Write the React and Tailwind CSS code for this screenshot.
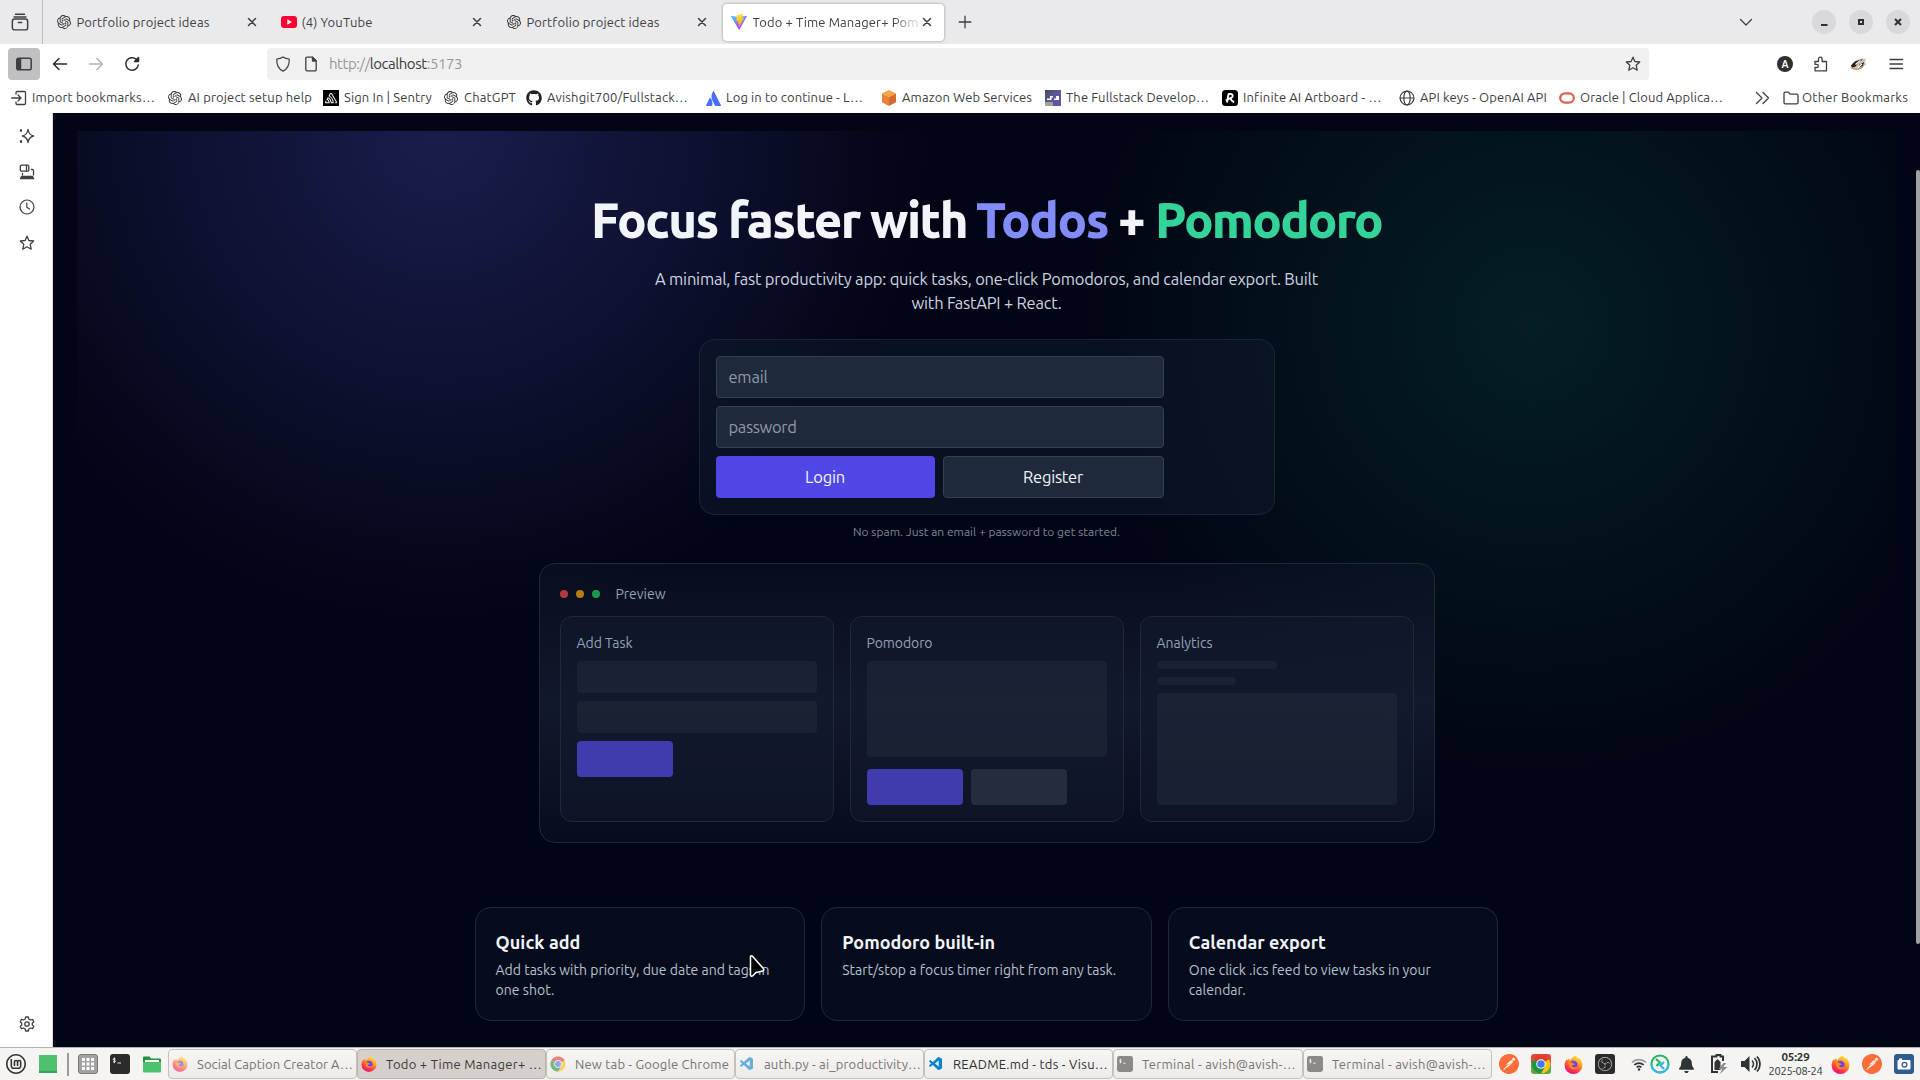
import React, { useLayoutEffect, useRef } from "react";
import { SiOpenai, SiSentry, SiPostman, SiObsstudio, SiLinuxmint, SiAtlassian } from "react-icons/si";
import { FaGithub, FaBell } from "react-icons/fa";
import { VscVscode } from "react-icons/vsc";

/* Single line of text whose letter spacing is tuned so that it spans `w` pixels. */
function Fit({ w, className = "", children }) {
  const ref = useRef(null);
  useLayoutEffect(() => {
    const el = ref.current;
    const tune = () => {
      el.style.letterSpacing = "0px";
      const natural = el.getBoundingClientRect().width;
      el.style.letterSpacing = (w - natural) / el.textContent.length + "px";
    };
    tune();
    document.fonts?.ready.then(tune);
  }, [w]);
  return (
    <span ref={ref} className={"inline-block shrink-0 whitespace-nowrap " + className}>
      {children}
    </span>
  );
}

function Svg({ s = 16, children, className = "", sw = 1.3 }) {
  return (
    <svg width={s} height={s} viewBox="0 0 16 16" fill="none" stroke="currentColor" strokeWidth={sw} strokeLinecap="round" strokeLinejoin="round" className={"shrink-0 " + className}>
      {children}
    </svg>
  );
}

const STAR = "M8 1.2l1.9 4.3 4.8.5-3.5 3.3 1 4.9L8 11.8l-4.2 2.4 1-4.9L1.3 6l4.8-.5z";

const Close = () => (
  <Svg s={16} sw={1.5}>
    <path d="M4.5 4.5l7 7M11.5 4.5l-7 7" />
  </Svg>
);

const YouTube = () => (
  <svg width="16" height="16" viewBox="0 0 16 16" className="shrink-0">
    <rect y="2" width="16" height="12" rx="3" fill="#ff0033" />
    <path d="M6.3 5.2v5.6L11 8z" fill="#fff" />
  </svg>
);

const Vite = () => (
  <svg width="16" height="16" viewBox="0 0 32 32" className="shrink-0">
    <defs>
      <linearGradient id="va" x1="0" y1="0" x2=".6" y2="1">
        <stop offset="0" stopColor="#41d1ff" />
        <stop offset="1" stopColor="#bd34fe" />
      </linearGradient>
      <linearGradient id="vb" x1=".4" y1="0" x2=".6" y2="1">
        <stop offset="0" stopColor="#ffea83" />
        <stop offset=".1" stopColor="#ffdd35" />
        <stop offset="1" stopColor="#ffa800" />
      </linearGradient>
    </defs>
    <path d="M31.6 5L17 31c-.4.6-1.300.6-1.600 0L.2 5c-.4-.7.2-1.500 1-1.300L16 6.300 30.700 3.700c.8-.2 1.400.6.9 1.300z" fill="url(#va)" />
    <path d="M22.700.1l-10.900 2.100c-.2 0-.3.2-.3.400l-.7 11.300c0 .3.2.5.5.4l3-.7c.3 0 .6.200.5.5l-.9 4.400c-.1.300.2.5.5.400l1.900-.5c.3-.1.600.1.500.5L15.400 25.700c-.1.500.5.7.7.4L26 8c.100-.300-.100-.600-.500-.500l-3.100.6c-.3 0-.6-.2-.500-.5l2-7c.1-.3-.2-.6-1.200-.5z" fill="url(#vb)" />
  </svg>
);

const Chrome = ({ s = 16 }) => (
  <svg width={s} height={s} viewBox="0 0 16 16" className="shrink-0">
    <circle cx="8" cy="8" r="7.500" fill="#fbc116" />
    <path d="M8 8L1.500 4.250A7.500 7.500 0 0 1 14.500 4.250z" fill="#e33b2e" />
    <path d="M8 8L1.500 4.250A7.500 7.500 0 0 0 8 15.500L11.200 9.900z" fill="#229342" />
    <path d="M8 4.200h6.500l-.6-1H5z" fill="#e33b2e" />
    <circle cx="8" cy="8" r="3.800" fill="#fff" />
    <circle cx="8" cy="8" r="3" fill="#3b7ded" />
  </svg>
);

const Firefox = ({ s = 16 }) => (
  <svg width={s} height={s} viewBox="0 0 16 16" className="shrink-0">
    <defs>
      <linearGradient id="ffx" x1=".8" y1="0" x2=".3" y2="1">
        <stop offset="0" stopColor="#fff044" />
        <stop offset=".4" stopColor="#ff9a1f" />
        <stop offset=".75" stopColor="#ff3750" />
        <stop offset="1" stopColor="#eb0878" />
      </linearGradient>
    </defs>
    <path d="M10 .3c.5 1.500 1.400 2 2.300 2.800 0-.3 0-.6-.1-.9 2 1.400 3.400 3.800 3.300 6.500a7.500 7.300 0 0 1-15 0c0-2 .6-3.900 1.800-5.400l.2 1.200c.6-.8 1.100-1.400 1.900-1.800 0 .8.200 1.400.7 1.900C6.500 3 8 1 10 .3z" fill="url(#ffx)" />
    <circle cx="8" cy="8.300" r="3.500" fill="#7542e5" />
    <path d="M4 6.500c1.200-.6 2.500-.4 3.500.4l1.500.6c-.4 1-1.500 1-2 1.300-.4.800.5 1.700 1.600 1.700 1.300 0 1.900-.7 2.700-.6-.5 1.200-1.800 2-3.400 2C5.700 11.900 3.900 10 4 6.500z" fill="#ff8a16" />
  </svg>
);

const Term = ({ s = 20, c = "#2b2b2b" }) => (
  <svg width={s} height={s} viewBox="0 0 20 20" className="shrink-0">
    <rect width="20" height="20" rx="3" fill={c} />
    <path d="M5.500 5c-1.500-.9-2.500-.2-2.200.6.300.8 2 .6 2.200 1.500.2.900-1.300 1.300-2.500.5M4.300 3.500v5.600M7.500 9h3.500" stroke="#fff" strokeWidth=".9" fill="none" />
  </svg>
);

const Tab = ({ icon, text, w, active }) => (
  <div className={"mr-1 flex h-[37px] w-[221px] shrink-0 items-center rounded pl-2 pr-[9px] " + (active ? "bg-white shadow-[0_0_3px_rgba(0,0,0,0.4)]" : "")}>
    {icon}
    {active ? (
      <div className="ml-1.5 min-w-0 flex-1 pt-px [mask-image:linear-gradient(to_right,#000_85%,rgba(0,0,0,0.25)_96%)]">
        <Fit w={w}>{text}</Fit>
      </div>
    ) : (
      <div className="ml-[5px] min-w-0 flex-1 pt-px">
        <Fit w={w}>{text}</Fit>
      </div>
    )}
    <Close />
  </div>
);

const GPT = () => <SiOpenai className="size-[14px] shrink-0 text-[#333]" />;

const bookmarks = [
  ["w-[156px]", <Svg><path d="M5 4V2.700A1.200 1.200 0 0 1 6.200 1.500h7A1.200 1.200 0 0 1 14.500 2.700v10.600a1.200 1.200 0 0 1-1.300 1.200h-7A1.200 1.200 0 0 1 5 13.300V12M.8 8h9M7 5l3 3-3 3" /></Svg>, "Import bookmarks…", 123],
  ["w-[156px]", <GPT />, "AI project setup help", 124],
  ["w-[120px]", <span className="flex size-4 shrink-0 items-center justify-center bg-black"><SiSentry className="size-3 text-white" /></span>, "Sign In | Sentry", 88],
  ["w-[83px]", <GPT />, "ChatGPT", 52],
  ["w-[179px]", <FaGithub className="size-4 shrink-0 text-[#1f2328]" />, "Avishgit700/Fullstack…", 141],
  ["w-[176px]", <SiAtlassian className="size-[15px] shrink-0 text-[#4c6fff]" />, "Log in to continue - L…", 137],
  ["w-[164px]", <svg width="16" height="16" viewBox="0 0 16 16" className="shrink-0"><path d="M8 0l7 3.500-7 3.500-7-3.500z" fill="#f2a545" /><path d="M1 3.500L8 7v9l-7-3.700z" fill="#e8843a" /><path d="M15 3.500L8 7v9l7-3.700z" fill="#d66a2c" /></svg>, "Amazon Web Services", 130],
  ["w-[177px]", <span className="flex size-4 shrink-0 items-center justify-center bg-linear-to-br from-[#3f4a54] via-[#5a5aa0] to-[#6b4fa8]"><svg width="16" height="16" viewBox="0 0 16 16"><rect y="12" width="8" height="4" fill="#b9c39a" opacity=".7" /><path d="M2 8.500h3V6h3v1.500H6.500V10H2zM9 8.500h2V6h3v4H9z" fill="#fff" /></svg></span>, "The Fullstack Develop…", 143],
  ["w-[177px]", <svg width="16" height="16" viewBox="0 0 16 16" className="shrink-0"><rect width="16" height="16" rx="3.500" /><path d="M6 4h3a1.900 1.900 0 0 1 .4 3.700L8.200 8.300c.8 1.300 1.600 3 4 3.700M6.500 4L5 12.500M3.800 10.500l4-2.200" stroke="#fff" strokeWidth="1.900" fill="none" /></svg>, "Infinite AI Artboard - …", 138],
  ["w-[160px]", <Svg sw={1.2}><circle cx="8" cy="8" r="6.900" /><ellipse cx="8" cy="8" rx="3.200" ry="6.900" /><path d="M1.200 8h13.600" strokeWidth="1.100" /></Svg>, "API keys - OpenAI API", 127],
  ["w-[180px]", <Svg className="text-[#d9604c]" sw={2.2}><rect x="1.200" y="3.300" width="13.600" height="9.400" rx="4.700" /></Svg>, "Oracle | Cloud Applica…", 143],
];

const tasks = [
  ["w-[189px]", <span className="opacity-60"><Firefox /></span>, "Social Caption Creator A…", 156, "text-[#77736f]"],
  ["w-[189px]", <Firefox />, "Todo + Time Manager+ …", 156, "text-[#3a3a3a]", true],
  ["w-[189px]", <span className="opacity-60"><Chrome /></span>, "New tab - Google Chrome", 154, "text-[#77736f]"],
  ["w-[189px]", <VscVscode className="size-4 text-[#0a84d0] opacity-60" />, "auth.py - ai_productivity…", 157, "text-[#77736f]"],
  ["w-[189px]", <VscVscode className="size-4 text-[#0a84d0]" />, "README.md - tds - Visu…", 155, "text-[#303030]"],
  ["w-[190px]", <Term s={16} c="#8b8a88" />, "Terminal - avish@avish-…", 154, "text-[#77736f]"],
  ["w-[189px]", <Term s={16} c="#8b8a88" />, "Terminal - avish@avish-…", 154, "text-[#77736f]"],
];

const Slot = ({ className = "w-8", children }) => <div className={"flex shrink-0 items-center justify-center " + className}>{children}</div>;

const Postman = () => (
  <span className="flex size-5 items-center justify-center rounded-full bg-white">
    <SiPostman className="size-5 text-[#ff6c37]" />
  </span>
);

function BrowserChrome() {
  return (
    <header className="h-[113px] shrink-0 bg-white text-[13px] text-[#3e3e44]">
      <div className="flex h-11 items-center bg-[#eaeaec]">
        <div className="mr-[4.500px] flex h-11 w-[43px] items-center justify-center border-r border-[#bcbcc0] pr-0.5">
          <Svg s={18} sw={1.3}><path d="M4 1.200h8M2.700 3.500h10.600" /><rect x="1.200" y="5.300" width="13.600" height="9.700" rx="2" /><path d="M6.500 8.500h3" /></Svg>
        </div>
        <Tab icon={<SiOpenai className="size-4 shrink-0 p-px text-[#333]" />} text="Portfolio project ideas" w={133} />
        <Tab icon={<YouTube />} text="(4) YouTube" w={71} />
        <Tab icon={<SiOpenai className="size-4 shrink-0 p-px text-[#333]" />} text="Portfolio project ideas" w={133} />
        <Tab icon={<Vite />} text="Todo + Time Manager+ Pom" w={166} active />
        <Svg s={16} className="ml-[9px]"><path d="M8 2.200v11.600M2.200 8h11.600" /></Svg>
        <Svg s={16} className="ml-auto mr-[58px]"><path d="M2.500 5.500L8 11l5.500-5.500" /></Svg>
        <div className="mr-[10px] flex gap-[13px]">
          {["M5 11h6.500", "M6 6h4v4H6z", "M5 5l6 6M11 5l-6 6"].map((d) => (
            <div key={d} className="flex size-6 items-center justify-center rounded-full bg-[#d9d9dc] text-[#2e2e33]">
              <svg width="16" height="16" viewBox="0 0 16 16" fill="none" stroke="currentColor" strokeWidth="2"><path d={d} /></svg>
            </div>
          ))}
        </div>
      </div>

      <div className="flex h-10 items-center">
        <div className="ml-2 flex size-8 items-center justify-center rounded bg-[#c0c0c3]">
          <Svg sw={1.500}><rect x=".8" y="2.200" width="14.400" height="11.600" rx="1.800" /><path d="M1.500 3v10h3V3z" fill="currentColor" /></Svg>
        </div>
        <Svg className="ml-3 text-[#2b2b30]" sw={1.500}><path d="M14.500 8H1.500M7 2.500L1.500 8 7 13.500" /></Svg>
        <Svg className="ml-5 text-[#b4b4b8]" sw={1.500}><path d="M1.500 8h13M9 2.500L14.500 8 9 13.500" /></Svg>
        <Svg className="ml-5 text-[#2b2b30]" sw={1.500}><path d="M14.300 9A6.300 6.300 0 1 1 12.300 3.300L14 5M14.500 1.500V5.500h-4z" /></Svg>
        <div className="ml-[127px] flex h-8 w-[1382px] items-center rounded bg-[#f0f0f1] pl-2">
          <Svg sw={1.200}><path d="M8 .9c2 1.300 4 1.800 6.200 2.100C14.500 8.500 12.500 13 8 15.100 3.500 13 1.500 8.500 1.800 3 4 2.700 6 2.200 8 .9z" /></Svg>
          <Svg className="ml-3" sw={1.300}><path d="M9.500 1.200H4A1.200 1.200 0 0 0 2.800 2.400v11.200A1.200 1.200 0 0 0 4 14.800h8a1.200 1.200 0 0 0 1.200-1.200V5z" /><path d="M9.500 1.200V5h3.700z" fill="currentColor" /></Svg>
          <Fit w={133} className="ml-[10px] text-[15px] text-[#98989c]">http://<span className="text-[#3a3a40]">localhost</span>:5173</Fit>
          <Svg className="ml-auto mr-2"><path d={STAR} /></Svg>
        </div>
        <div className="ml-auto mr-4 flex items-center gap-5">
          <span className="flex size-4 items-center justify-center rounded-full bg-[#2e2e33] text-[10px] font-bold text-white">A</span>
          <Svg><path d="M2 5.500h3.500V3a1.800 1.800 0 0 1 3.600 0v2.500h4.400v9.300H2v-3.300h1.700a1.600 1.600 0 0 0 0-3.200H2z" /></Svg>
          <svg width="18" height="16" viewBox="0 0 18 16"><path d="M1 11.500L3.500 7 7 4l6-1.500 4 .5-1 2.500 1 3-4 3.500-6 1.500z" fill="#cfc4b6" /><path d="M2 9.500l4-4 8-2.500-5 4.500-3 3.500-3 .5zM10 9l5-3-1 4-4 1.500z" fill="#26201c" /><path d="M6.500 8.500l5-4M9 11.500l4-3.500" stroke="#fff" strokeWidth="1.300" /><path d="M2.500 12.500l6 1 5-2" stroke="#d97b28" fill="none" /></svg>
          <Svg className="ml-px"><path d="M2 3.500h12.500M2 8h12.500M2 12.500h12.500" /></Svg>
        </div>
      </div>

      <div className="flex h-[29px] items-center pb-px pl-[11px]">
        {bookmarks.map(([cls, icon, text, w]) => (
          <div key={text} className={"flex shrink-0 items-center " + cls}>
            <span className="mr-[5px] flex w-4 justify-center">{icon}</span>
            <Fit w={w}>{text}</Fit>
          </div>
        ))}
        <Svg className="ml-[15px] mr-[13px]"><path d="M2.500 2.500L8 8l-5.500 5.500M9 2.500L14.500 8 9 13.500" /></Svg>
        <Svg className="mr-[3px]"><path d="M1 3.500A1.300 1.300 0 0 1 2.300 2.200h3.200l1.500 2h6.700A1.300 1.300 0 0 1 15 5.500v7a1.300 1.300 0 0 1-1.300 1.300H2.300A1.300 1.300 0 0 1 1 12.500z" /></Svg>
        <Fit w={106}>Other Bookmarks</Fit>
      </div>
    </header>
  );
}

function Sidebar() {
  return (
    <aside className="flex w-[53px] shrink-0 flex-col items-center gap-[19.500px] border-r border-[#dcdce0] bg-white pb-[15px] pl-0.5 pt-[15px] text-[#3e3e44]">
      <Svg><path d="M9 1.500c.6 4 1.800 5.500 5.500 6.500-3.700 1-4.900 2.500-5.500 6.500C8.400 10.500 7.200 9 3.500 8 7.200 7 8.400 5.500 9 1.500z" /><path d="M2 2v.8M2 13.200v.8" strokeWidth="2.200" /></Svg>
      <Svg><rect x="1.300" y="1.200" width="8.500" height="6" rx="1.300" /><path d="M7.500 1.500v5.500M12.500 5.500h1a1 1 0 0 1 1 1V11M3.500 9.500V11" /><path d="M2.500 12.500h11l1.200 2.200H1.500z" fill="currentColor" /></Svg>
      <Svg sw={1.200}><circle cx="8" cy="8" r="7" /><path d="M7.800 4v4.300l2.800 1.700" /></Svg>
      <Svg><path d={STAR} /></Svg>
      <Svg className="mt-auto"><path d="M6.700 1h2.600l.5 2 1.700 1 2-.6 1.300 2.300L13.300 7.200v1.700l1.500 1.500-1.300 2.200-2-.6-1.700 1-.5 2H6.700l-.5-2-1.700-1-2 .6-1.300-2.200 1.500-1.500V7.200L1.200 5.700l1.300-2.300 2 .6 1.700-1z" /><circle cx="8" cy="8" r="2.200" /></Svg>
    </aside>
  );
}

const Box = ({ className }) => <div className={"rounded bg-[#1e293b]/60 " + className} />;

const PreviewCard = ({ title, w, children }) => (
  <div className="rounded-xl border border-[#1e293b] bg-[#131a2d]/50 p-4">
    <div className="mb-2 h-5 text-sm leading-5 text-[#94a3b8]"><Fit w={w}>{title}</Fit></div>
    {children}
  </div>
);

const Feature = ({ title, tw, lines, children }) => (
  <div className="relative rounded-2xl border border-[#1e293b] bg-[#0f172a]/40 p-5">
    <div className="text-lg font-semibold leading-7 text-[#f1f5f9]"><Fit w={tw}>{title}</Fit></div>
    <div className="mt-1 min-h-10 text-sm leading-5 text-[#b6c1cf]">
      {lines.map(([t, w]) => <div key={t} className="h-5"><Fit w={w}>{t}</Fit></div>)}
    </div>
    {children}
  </div>
);

function Page() {
  return (
    <main className="relative min-w-0 flex-1 overflow-hidden bg-[#020515] pl-6 pr-6 pt-[18px]">
      <section className="flex h-[776px] flex-col items-center bg-[radial-gradient(490px_490px_at_20%_0%,rgba(99,102,241,0.25),transparent),radial-gradient(450px_450px_at_80%_25%,rgba(16,185,129,0.14),transparent)] pt-[65px]">
        <h1 className="flex text-[49px] font-extrabold leading-[48px] text-[#f1f5f9]">
          <Fit w={376} className="mr-[9px]">Focus faster with</Fit>
          <Fit w={132} className="mr-[10px] text-[#818cf8]">Todos</Fit>
          <Fit w={27} className="mr-[10px]">+</Fit>
          <Fit w={227} className="text-[#34d399]">Pomodoro</Fit>
        </h1>
        <div className="mt-[23px] flex flex-col items-center text-[16.500px] leading-6 text-[#cbd5e1]">
          <Fit w={663}>A minimal, fast productivity app: quick tasks, one-click Pomodoros, and calendar export. Built</Fit>
          <Fit w={150}>with FastAPI + React.</Fit>
        </div>
        <div className="mt-6 w-[576px] rounded-2xl border border-[#1e293b]/80 bg-[#0f172a]/60 p-4 text-[16.500px]">
          <div className="grid w-[448px] gap-2">
            <div className="flex h-[42px] items-center rounded border border-[#334155] bg-[#1e293b] px-3 text-[#8f99a8]"><Fit w={39}>email</Fit></div>
            <div className="flex h-[42px] items-center rounded border border-[#334155] bg-[#1e293b] px-3 text-[#8f99a8]"><Fit w={68}>password</Fit></div>
            <div className="flex gap-2 text-[#f1f5f9]">
              <button className="h-[42px] w-[219px] rounded bg-[#4f46e5]"><Fit w={40}>Login</Fit></button>
              <button className="h-[42px] flex-1 rounded border border-[#334155] bg-[#1e293b]"><Fit w={60}>Register</Fit></button>
            </div>
          </div>
        </div>
        <div className="mt-[9px] h-[15px] text-xs leading-4 text-[#7c899b]"><Fit w={267}>No spam. Just an email + password to get started.</Fit></div>

        <div className="mt-6 w-[896px] rounded-2xl border border-[#1e293b] bg-[linear-gradient(to_bottom,rgba(15,23,42,0.4),rgba(24,31,51,0.75)_50%,rgba(15,23,42,0.4))] p-5">
          <div className="mb-3 flex h-5 items-center gap-2">
            <span className="size-2 rounded-full bg-[#b6393f]" />
            <span className="size-2 rounded-full bg-[#b87a12]" />
            <span className="size-2 rounded-full bg-[#1b9a4d]" />
            <Fit w={50} className="ml-2 text-sm leading-5 text-[#94a3b8]">Preview</Fit>
          </div>
          <div className="grid grid-cols-3 gap-4">
            <PreviewCard title="Add Task" w={56}>
              <Box className="h-8" />
              <Box className="mt-2 h-8" />
              <div className="mt-2 h-9 w-24 rounded bg-[#413bb0]" />
            </PreviewCard>
            <PreviewCard title="Pomodoro" w={66}>
              <Box className="h-24" />
              <div className="mt-3 flex gap-2">
                <div className="h-9 w-24 rounded bg-[#413bb0]" />
                <div className="h-9 w-24 rounded bg-[#232d3d]" />
              </div>
            </PreviewCard>
            <PreviewCard title="Analytics" w={56}>
              <Box className="h-2 w-1/2" />
              <Box className="mt-2 h-2 w-1/3" />
              <Box className="mt-2 h-28" />
            </PreviewCard>
          </div>
        </div>
      </section>

      <section className="mx-auto grid w-[1024px] grid-cols-3 gap-4">
        <Feature title="Quick add" tw={85} lines={[["Add tasks with priority, due date and tags in", 274], ["one shot.", 59]]}>
          <svg width="20" height="26" viewBox="0 0 20 26" className="absolute left-[271px] top-[46px]">
            <path d="M3.500 2.500v18.500c0 1.500 1.400 1.600 2.300.7L9 18.500l6.800-1.600c1.300-.3 1.300-1.500.5-2.300L5.500 2.300c-.8-.9-2-.8-2 .2z" fill="#000" stroke="#fff" strokeWidth="1.500" />
          </svg>
        </Feature>
        <Feature title="Pomodoro built-in" tw={153} lines={[["Start/stop a focus timer right from any task.", 274]]} />
        <Feature title="Calendar export" tw={137} lines={[["One click .ics feed to view tasks in your", 242], ["calendar.", 57]]} />
      </section>
      <div className="absolute right-0 top-[57px] h-[774px] w-1 rounded-full bg-[#a0a0a3]" />
    </main>
  );
}

function Taskbar() {
  return (
    <footer className="flex h-[33px] shrink-0 items-stretch border-t border-[#b8b3ae] bg-[#f5f4f2] text-[13px]">
      <Slot><SiLinuxmint className="size-5 text-[#333]" /></Slot>
      <Slot><div className="h-[18px] w-[18px] border-b-2 border-[#36a257] bg-[#4fc16e]" /></Slot>
      <Slot className="w-2"><div className="h-[23px] w-0.5 bg-[#9a9a9a]" /></Slot>
      <Slot>
        <svg width="20" height="20" viewBox="0 0 20 20"><rect x=".5" y=".5" width="19" height="19" rx="2.500" fill="#a3a3a3" stroke="#777" />{[4, 8.500, 13].map((y) => [4, 8.500, 13].map((x) => <rect key={x + "-" + y} x={x} y={y} width="3" height="3" fill="#fff" />))}</svg>
      </Slot>
      <Slot><Term /></Slot>
      <Slot>
        <svg width="18" height="17" viewBox="0 0 18 17"><path d="M0 1.500A1 1 0 0 1 1 .5h5.500L8 2.500h9a1 1 0 0 1 1 1V10H0z" fill="#249148" /><path d="M2 4h14v4H2z" fill="#fff" /><path d="M0 6h18v9.500a1 1 0 0 1-1 1H1a1 1 0 0 1-1-1z" fill="#4cc26c" /></svg>
      </Slot>
      <div className="flex shrink-0 py-px">
        {tasks.map(([cls, icon, text, w, color, active], i) => (
          <div key={i} className={"flex items-center rounded border pl-[3px] " + cls + " " + color + (active ? " border-[#b9b3ad] bg-[#d5d0cb]" : " border-[#c6c0b9] bg-linear-to-b from-[#f7f6f5] to-[#ecebe9]")}>
            <span className="mr-[9px] flex w-4 justify-center">{icon}</span>
            <Fit w={w} className="pt-px">{text}</Fit>
          </div>
        ))}
      </div>
      <Slot className="ml-px w-8"><Postman /></Slot>
      <Slot><span className="flex size-5 items-center justify-center overflow-hidden rounded-[3px] bg-linear-to-b from-[#e0483a] from-40% to-[#57a845] to-60%"><Chrome s={20} /></span></Slot>
      <Slot><Firefox s={19} /></Slot>
      <Slot><span className="flex size-5 items-center justify-center rounded-[3px] bg-[#2a2a2c]"><SiObsstudio className="size-3.5 text-[#c8c8c8]" /></span></Slot>
      <Slot className="ml-[9px] w-[18px]">
        <svg width="16" height="13" viewBox="0 0 16 13" fill="none" stroke="#2e3436" strokeWidth="1.700"><path d="M1 4.500a10 10 0 0 1 14 0" opacity=".45" /><path d="M3.300 7a6.800 6.800 0 0 1 9.400 0M5.600 9.400a3.500 3.500 0 0 1 4.800 0" /><circle cx="8" cy="11.500" r="1.200" fill="#2e3436" stroke="none" /></svg>
      </Slot>
      <Slot className="w-6">
        <svg width="20" height="20" viewBox="0 0 20 20" fill="none"><circle cx="10" cy="10" r="8.600" stroke="#25b36b" strokeWidth="2" /><path d="M1.400 10a8.600 8.600 0 0 0 17.200 0" stroke="#36b5e8" strokeWidth="2" /><path d="M6 5l4 3.500L6.500 12" stroke="#25b36b" strokeWidth="2.200" /><path d="M14 8l-3.500 3.500L14 15" stroke="#36b5e8" strokeWidth="2.200" /></svg>
      </Slot>
      <Slot className="w-7"><FaBell className="size-[17px] text-[#2e3436]" /></Slot>
      <Slot className="ml-[3px] w-8">
        <svg width="18" height="20" viewBox="0 0 18 20"><path d="M4 2.500h2.500V1h4v1.500H13V7M4 2.500H2V18h6" fill="none" stroke="#2e3436" strokeWidth="2" /><path d="M4.500 8L7.500 5l3 3v8h-6z" fill="#2e3436" /><path d="M13.500 9L8.500 15h3.500l-2 5 7.500-7h-4l2.500-4z" fill="#8b8d8e" /></svg>
      </Slot>
      <Slot>
        <svg width="20" height="18" viewBox="0 0 20 18"><path d="M0 6h3.500L8.500 1v16l-5-5H0z" fill="#2e3436" /><path d="M11 5.500a5 5 0 0 1 0 7M13.500 3a8.500 8.500 0 0 1 0 12M16 1.500a11 11 0 0 1 0 15" fill="none" stroke="#2e3436" strokeWidth="1.700" /></svg>
      </Slot>
      <div className="flex w-[58px] flex-col items-center justify-center text-[#2e3436]">
        <Fit w={28} className="text-[11.500px] font-bold leading-[14px]">05:29</Fit>
        <Fit w={54} className="text-[11px] leading-[14px]">2025-08-24</Fit>
      </div>
      <Slot><Firefox s={19} /></Slot>
      <Slot><Postman /></Slot>
      <Slot>
        <svg width="20" height="20" viewBox="0 0 20 20"><rect width="20" height="20" rx="3" fill="#2f5a94" /><rect x="3.500" y="6" width="13" height="9.500" rx="1" fill="#fff" /><rect x="5" y="4.500" width="3" height="2" fill="#fff" /><circle cx="10.500" cy="10.700" r="3" fill="#2f5a94" /><circle cx="10.500" cy="10.700" r="1.700" fill="#fff" /></svg>
      </Slot>
    </footer>
  );
}

export default function App() {
  return (
    <div className="flex h-[1080px] w-[1920px] flex-col overflow-hidden bg-white font-['Ubuntu','Noto_Sans',sans-serif]">
      <BrowserChrome />
      <div className="flex min-h-0 flex-1">
        <Sidebar />
        <Page />
      </div>
      <Taskbar />
    </div>
  );
}
